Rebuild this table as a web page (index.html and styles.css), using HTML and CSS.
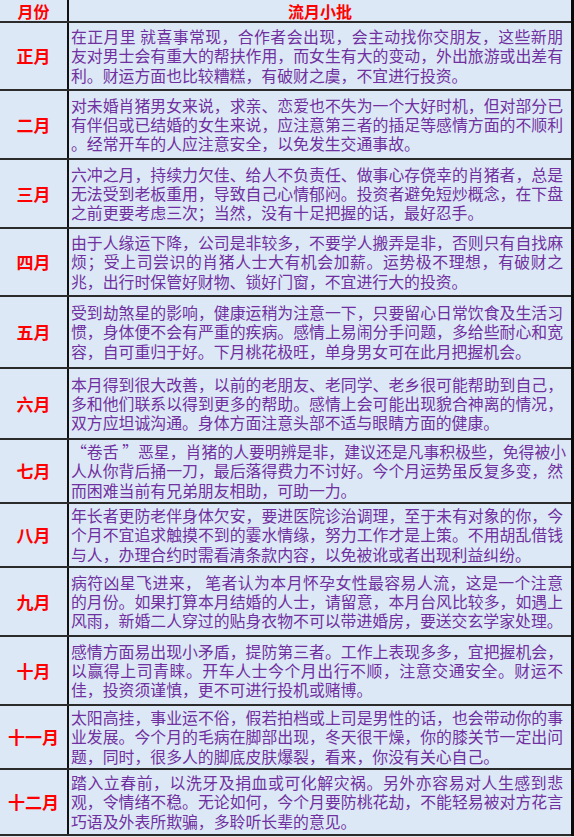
FILE: index.html
```html
<!DOCTYPE html>
<html lang="zh-CN">
<head>
<meta charset="utf-8">
<title>流月小批</title>
<link rel="stylesheet" href="styles.css">
</head>
<body>
<div class="sheet">
  <div class="row head">
    <div class="m">月份</div>
    <div class="h">流月小批</div>
  </div>
  <div class="row r68">
    <div class="m">正月</div>
    <div class="t">
      <span class="ln">在正月里 就喜事常现，合作者会出现，会主动找你交朋友，这些新朋</span>
      <span class="ln">友对男士会有重大的帮扶作用，而女生有大的变动，外出旅游或出差有</span>
      <span class="ln end">利。财运方面也比较糟糕，有破财之虞，不宜进行投资。</span>
    </div>
  </div>
  <div class="row r69">
    <div class="m">二月</div>
    <div class="t">
      <span class="ln">对未婚肖猪男女来说，求亲、恋爱也不失为一个大好时机，但对部分已</span>
      <span class="ln">有伴侣或已结婚的女生来说，应注意第三者的插足等感情方面的不顺利</span>
      <span class="ln end">。经常开车的人应注意安全，以免发生交通事故。</span>
    </div>
  </div>
  <div class="row r69">
    <div class="m">三月</div>
    <div class="t">
      <span class="ln">六冲之月，持续力欠佳、给人不负责任、做事心存侥幸的肖猪者，总是</span>
      <span class="ln">无法受到老板重用，导致自己心情郁闷。投资者避免短炒概念，在下盘</span>
      <span class="ln end">之前更要考虑三次；当然，没有十足把握的话，最好忍手。</span>
    </div>
  </div>
  <div class="row r68">
    <div class="m">四月</div>
    <div class="t">
      <span class="ln">由于人缘运下降，公司是非较多，不要学人搬弄是非，否则只有自找麻</span>
      <span class="ln">烦；受上司尝识的肖猪人士大有机会加薪。运势极不理想，有破财之</span>
      <span class="ln end">兆，出行时保管好财物、锁好门窗，不宜进行大的投资。</span>
    </div>
  </div>
  <div class="row r72">
    <div class="m">五月</div>
    <div class="t">
      <span class="ln">受到劫煞星的影响，健康运稍为注意一下，只要留心日常饮食及生活习</span>
      <span class="ln">惯，身体便不会有严重的疾病。感情上易闹分手问题，多给些耐心和宽</span>
      <span class="ln end">容，自可重归于好。下月桃花极旺，单身男女可在此月把握机会。</span>
    </div>
  </div>
  <div class="row r71">
    <div class="m">六月</div>
    <div class="t">
      <span class="ln">本月得到很大改善，以前的老朋友、老同学、老乡很可能帮助到自己，</span>
      <span class="ln">多和他们联系以得到更多的帮助。感情上会可能出现貌合神离的情况，</span>
      <span class="ln end">双方应坦诚沟通。身体方面注意头部不适与眼睛方面的健康。</span>
    </div>
  </div>
  <div class="row r64">
    <div class="m">七月</div>
    <div class="t">
      <span class="ln">“卷舌 ”恶星，肖猪的人要明辨是非，建议还是凡事积极些，免得被小</span>
      <span class="ln">人从你背后捅一刀，最后落得费力不讨好。今个月运势虽反复多变，然</span>
      <span class="ln end">而困难当前有兄弟朋友相助，可助一力。</span>
    </div>
  </div>
  <div class="row r64">
    <div class="m">八月</div>
    <div class="t">
      <span class="ln">年长者更防老伴身体欠安，要进医院诊治调理，至于未有对象的你，今</span>
      <span class="ln">个月不宜追求触摸不到的霎水情缘，努力工作才是上策。不用胡乱借钱</span>
      <span class="ln end">与人，办理合约时需看清条款内容，以免被讹或者出现利益纠纷。</span>
    </div>
  </div>
  <div class="row r69">
    <div class="m">九月</div>
    <div class="t">
      <span class="ln">病符凶星飞进来， 笔者认为本月怀孕女性最容易人流，这是一个注意</span>
      <span class="ln">的月份。如果打算本月结婚的人士，请留意，本月台风比较多，如遇上</span>
      <span class="ln end">风雨，新婚二人穿过的贴身衣物不可以带进婚房，要送交玄学家处理。</span>
    </div>
  </div>
  <div class="row r69">
    <div class="m">十月</div>
    <div class="t">
      <span class="ln">感情方面易出现小矛盾，提防第三者。工作上表现多多，宜把握机会，</span>
      <span class="ln">以赢得上司青睐。开车人士今个月出行不顺，注意交通安全。财运不</span>
      <span class="ln end">佳，投资须谨慎，更不可进行投机或赌博。</span>
    </div>
  </div>
  <div class="row r64">
    <div class="m">十一月</div>
    <div class="t">
      <span class="ln">太阳高挂，事业运不俗，假若拍档或上司是男性的话，也会带动你的事</span>
      <span class="ln">业发展。今个月的毛病在脚部出现，冬天很干燥，你的膝关节一定出问</span>
      <span class="ln end">题，同时，很多人的脚底皮肤爆裂，看来，你没有关心自己。</span>
    </div>
  </div>
  <div class="row r66">
    <div class="m">十二月</div>
    <div class="t">
      <span class="ln">踏入立春前，以洗牙及捐血或可化解灾祸。另外亦容易对人生感到悲</span>
      <span class="ln">观，令情绪不稳。无论如何，今个月要防桃花劫，不能轻易被对方花言</span>
      <span class="ln end">巧语及外表所欺骗，多聆听长辈的意见。</span>
    </div>
  </div>
</div>
</body>
</html>
```
FILE: styles.css
```css
html, body {
  margin: 0;
  padding: 0;
  background: #e4e6ea;
}
body {
  font-family: "Noto Sans CJK SC", "Noto Sans", sans-serif;
}
.sheet {
  width: 574px;
  box-sizing: border-box;
  border-right: 3px solid #0a0a0a;
  background: #dce8f5;
}
.row {
  display: flex;
  box-sizing: border-box;
  border-bottom: 2px solid #2b2b2b;
}
.head { height: 23px; }
.r64 { height: 64px; }
.r66 { height: 66px; }
.r68 { height: 68px; }
.r69 { height: 69px; }
.r71 { height: 71px; }
.r72 { height: 72px; }
.m {
  width: 67px;
  flex: none;
  border-right: 2px solid #111;
  display: flex;
  align-items: center;
  justify-content: center;
  color: #ff0000;
  font-weight: bold;
  font-size: 17px;
  line-height: 20px;
}
.head .m { font-size: 16px; }
.h {
  flex: 1;
  display: flex;
  align-items: center;
  justify-content: center;
  color: #ff0000;
  font-weight: bold;
  font-size: 16px;
  line-height: 20px;
}
.t {
  flex: 1;
  min-width: 0;
  padding: 0 8px 0 2px;
  display: flex;
  flex-direction: column;
  justify-content: center;
  color: #7030a0;
  font-size: 15.87px;
  line-height: 19.3px;
}
.ln {
  display: block;
  white-space: nowrap;
  text-align: justify;
  text-align-last: justify;
  text-justify: inter-character;
}
.ln.end {
  text-align-last: left;
}
```
